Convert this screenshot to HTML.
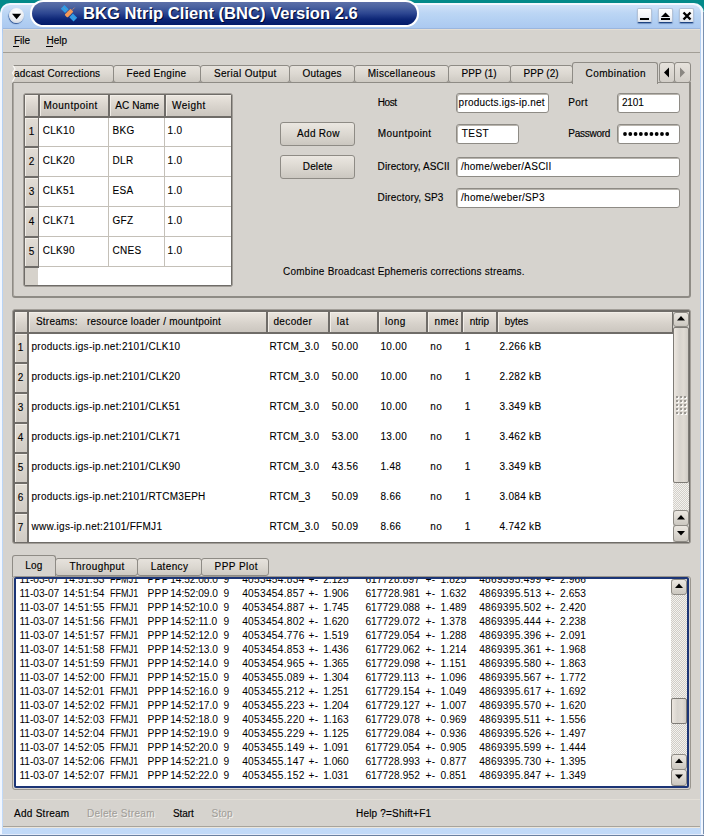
<!DOCTYPE html><html><head><meta charset="utf-8"><style>
*{margin:0;padding:0;box-sizing:border-box}
html,body{width:704px;height:836px;overflow:hidden;background:#038a8a;font-family:"Liberation Sans",sans-serif;}
.abs{position:absolute}
.t{position:absolute;white-space:pre;font-size:10px;line-height:14px;color:#000}
.tab{position:absolute;top:65px;height:18px;background:linear-gradient(#e6e2dc,#dcd8d1 50%,#cdc9c2);border:1px solid #8e8b85;border-radius:3px}
.inp{position:absolute;background:#fff;border:1px solid #8e8b85;border-radius:3px;box-shadow:inset 1px 1px 0 #b8b4ad}
.btn{position:absolute;background:linear-gradient(#ebe7e1,#dcd8d1 50%,#cbc7c0);border:1px solid #8e8b85;border-radius:3px}
.hc{position:absolute;background:linear-gradient(#ebe6df,#d8d3cc 55%,#cbc6bf)}
.rhc{position:absolute;background:linear-gradient(#e2ddd5,#d0cbc4)}
</style></head><body>
<div class="abs" style="left:0;top:3px;width:704px;height:833px;background:#f2f7ff;border-radius:10px 10px 0 0"></div>
<div class="abs" style="left:703px;top:12px;width:1px;height:824px;background:#7890b0"></div>
<div class="abs" style="left:2px;top:5px;width:699px;height:829px;background:linear-gradient(#d0e2f8 0,#bcd6f4 8px,#b2cff2 16px,#aac8f0 24px,#b4d0f2 30px,#c2daf8 100%);border-radius:8px 8px 0 0"></div>
<div class="abs" style="left:0;top:835px;width:704px;height:1px;background:#6a80a0"></div>
<div class="abs" style="left:0;top:834px;width:704px;height:1px;background:#e4ecfc"></div>
<div class="abs" style="left:30px;top:0;width:389px;height:27px;border-radius:13px;background:#fff"></div>
<div class="abs" style="left:32px;top:2px;width:385px;height:23px;border-radius:12px;background:linear-gradient(#5d70a8,#4a62a0 22%,#2c4590 50%,#0d2676 75%,#031b69)"></div>
<div class="t" style="left:83px;top:4px;font-size:16.6px;line-height:20px;color:#fff;font-weight:bold;text-shadow:1px 1px 0 #000a35">BKG Ntrip Client (BNC) Version 2.6</div>
<svg class="abs" style="left:56px;top:2px" width="26" height="22" viewBox="0 0 26 22">
<g transform="translate(13 11.2) rotate(45) scale(0.86)"><rect x="-10.5" y="-3" width="7" height="6" fill="#2d9be8"/><rect x="3.5" y="-3" width="7" height="6" fill="#2d9be8"/>
<line x1="-10" y1="0" x2="10" y2="0" stroke="#e0905a" stroke-width="0.6" stroke-dasharray="1 1"/>
<rect x="-2.4" y="-5" width="4.8" height="10" rx="1.2" fill="#f49a58"/><line x1="0" y1="-5" x2="0" y2="-9.5" stroke="#f0905a" stroke-width="1" stroke-dasharray="1.2 0.8"/></g></svg>
<div class="abs" style="left:9px;top:8px;width:15px;height:15px;border-radius:50%;background:radial-gradient(circle at 50% 30%,#ffffff,#eef0f4 50%,#c4ccd8);box-shadow:-0.5px 1px 1px #2a5090"></div>
<svg class="abs" style="left:11px;top:13px" width="11" height="7"><polygon points="1,0.8 10.2,0.8 5.6,6.2" fill="#000"/></svg>
<div class="abs" style="left:637px;top:8px;width:15px;height:15px;background:linear-gradient(#ffffff,#f4f6fa 50%,#dde3ec);border:1px solid #b4c2d6;border-bottom:1px solid #1e4482;border-radius:2px;box-shadow:0 1px 1px #6f90c0"></div>
<div class="abs" style="left:640px;top:18px;width:9px;height:2px;background:#000"></div>
<div class="abs" style="left:658px;top:8px;width:15px;height:15px;background:linear-gradient(#ffffff,#f4f6fa 50%,#dde3ec);border:1px solid #b4c2d6;border-bottom:1px solid #1e4482;border-radius:2px;box-shadow:0 1px 1px #6f90c0"></div>
<svg class="abs" style="left:661px;top:12px" width="10" height="9"><polygon points="4.5,0.5 9,5 0,5" fill="#000"/><rect x="0" y="6" width="9" height="2" fill="#000"/></svg>
<div class="abs" style="left:679px;top:8px;width:15px;height:15px;background:linear-gradient(#ffffff,#f4f6fa 50%,#dde3ec);border:1px solid #b4c2d6;border-bottom:1px solid #1e4482;border-radius:2px;box-shadow:0 1px 1px #6f90c0"></div>
<svg class="abs" style="left:682px;top:11px" width="10" height="10"><path d="M1.5 1.5L8.5 8.5M8.5 1.5L1.5 8.5" stroke="#000" stroke-width="2.4"/></svg>
<div class="abs" style="left:3px;top:28px;width:697px;height:1px;background:#9ab6de"></div>
<div class="abs" style="left:3px;top:29px;width:697px;height:799px;background:#d6d3ce"></div>
<div class="abs" style="left:3px;top:29px;width:697px;height:1px;background:#e4ded4"></div>
<div class="t" style="left:13.90px;top:34.00px;font-size:10px;letter-spacing:-0.003px;-webkit-text-stroke:0.15px #000;">File</div>
<div class="abs" style="left:13px;top:46px;width:6px;height:1px;background:#000"></div>
<div class="t" style="left:46.60px;top:34.00px;font-size:10px;letter-spacing:-0.023px;-webkit-text-stroke:0.15px #000;">Help</div>
<div class="abs" style="left:46px;top:46px;width:7px;height:1px;background:#000"></div>
<div class="abs" style="left:3px;top:52px;width:697px;height:1px;background:#a29e96"></div>
<div class="abs" style="left:12px;top:82px;width:679px;height:216px;border:1px solid #8e8b85;border-right-width:2px;border-bottom-width:2px;border-radius:0 0 3px 3px;background:#d6d3ce;box-shadow:inset 1px 0 0 #a9a59f"></div>
<div class="tab" style="left:13px;width:101px;border-left:none;border-radius:0 3px 3px 0"></div>
<svg class="abs" style="left:8px;top:64px" width="12" height="20"><polygon points="0,0 5,1.5 7,5 4.5,9 7,13 4.5,17.5 5,19 0,19" fill="#d6d3ce"/><polyline points="5,1.5 7,5 4.5,9 7,13 4.5,17.5" fill="none" stroke="#faf8f5" stroke-width="1.2"/></svg>
<div class="t" style="left:14.10px;top:67.00px;font-size:10px;letter-spacing:0.155px;-webkit-text-stroke:0.15px #000;">adcast Corrections</div>
<div class="tab" style="left:113px;width:88px"></div>
<div class="t" style="left:126.60px;top:67.00px;font-size:10px;letter-spacing:0.279px;-webkit-text-stroke:0.15px #000;">Feed Engine</div>
<div class="tab" style="left:200px;width:90px"></div>
<div class="t" style="left:213.90px;top:67.00px;font-size:10px;letter-spacing:0.345px;-webkit-text-stroke:0.15px #000;">Serial Output</div>
<div class="tab" style="left:289px;width:66px"></div>
<div class="t" style="left:302.50px;top:67.00px;font-size:10px;letter-spacing:0.183px;-webkit-text-stroke:0.15px #000;">Outages</div>
<div class="tab" style="left:354px;width:95px"></div>
<div class="t" style="left:367.70px;top:67.00px;font-size:10px;letter-spacing:0.345px;-webkit-text-stroke:0.15px #000;">Miscellaneous</div>
<div class="tab" style="left:448px;width:63px"></div>
<div class="t" style="left:461.60px;top:67.00px;font-size:10px;letter-spacing:0.045px;-webkit-text-stroke:0.15px #000;">PPP (1)</div>
<div class="tab" style="left:510px;width:63px"></div>
<div class="t" style="left:523.50px;top:67.00px;font-size:10px;letter-spacing:0.045px;-webkit-text-stroke:0.15px #000;">PPP (2)</div>
<div class="abs" style="left:572px;top:62px;width:86px;height:22px;background:#d6d3ce;border:1px solid #8e8b85;border-bottom:none;border-radius:3px 3px 0 0"></div>
<div class="t" style="left:585.60px;top:66.50px;font-size:10px;letter-spacing:0.386px;-webkit-text-stroke:0.15px #000;">Combination</div>
<div class="abs" style="left:659px;top:62px;width:16px;height:21px;background:linear-gradient(#e6e2dc,#d2cec8);border:1px solid #8e8b85;border-radius:3px"></div>
<svg class="abs" style="left:663px;top:67px" width="8" height="11"><polygon points="6,0.5 6,10.5 1,5.5" fill="#000"/></svg>
<div class="abs" style="left:674px;top:62px;width:17px;height:21px;background:linear-gradient(#e6e2dc,#d2cec8);border:1px solid #8e8b85;border-radius:3px"></div>
<svg class="abs" style="left:679px;top:67px" width="8" height="11"><polygon points="1,0.5 1,10.5 6,5.5" fill="#8a8782"/></svg>
<div class="abs" style="left:23px;top:93px;width:210px;height:194px;border:1px solid #a29e98;border-radius:3px;background:#6f6c68"></div>
<div class="abs" style="left:25px;top:95px;width:206px;height:190px;background:#fff"></div>
<div class="abs" style="left:25px;top:95px;width:13px;height:190px;background:#d6d2cb"></div>
<div class="abs" style="left:25px;top:95px;width:206px;height:23px;background:#6f6c68"></div>
<div class="hc" style="left:25px;top:95px;width:13px;height:21px;box-shadow:inset 1px 1px 0 #f2eee8"></div>
<div class="hc" style="left:40px;top:95px;width:68px;height:21px;box-shadow:inset 1px 1px 0 #f2eee8"></div>
<div class="hc" style="left:110px;top:95px;width:54px;height:21px;box-shadow:inset 1px 1px 0 #f2eee8"></div>
<div class="hc" style="left:166px;top:95px;width:65px;height:21px;box-shadow:inset 1px 1px 0 #f2eee8"></div>
<div class="t" style="left:43.40px;top:99.30px;font-size:10px;letter-spacing:0.502px;-webkit-text-stroke:0.15px #000;">Mountpoint</div>
<div class="t" style="left:115.20px;top:99.30px;font-size:10px;letter-spacing:0.092px;-webkit-text-stroke:0.15px #000;">AC Name</div>
<div class="t" style="left:171.90px;top:99.30px;font-size:10px;letter-spacing:0.492px;-webkit-text-stroke:0.15px #000;">Weight</div>
<div class="abs" style="left:25px;top:118px;width:14px;height:30px;background:#6f6c68"></div>
<div class="rhc" style="left:25px;top:118px;width:13px;height:28px;box-shadow:inset 1px 1px 0 #f2eee8"></div>
<div class="t" style="left:28.80px;top:124.50px;font-size:10px;letter-spacing:0.000px;-webkit-text-stroke:0.1px #000;">1</div>
<div class="abs" style="left:39px;top:146px;width:192px;height:1px;background:#c4c0b8"></div>
<div class="t" style="left:42.70px;top:124.00px;font-size:10px;letter-spacing:0.300px;-webkit-text-stroke:0.1px #000;">CLK10</div>
<div class="t" style="left:112.50px;top:124.00px;font-size:10px;letter-spacing:0.300px;-webkit-text-stroke:0.1px #000;">BKG</div>
<div class="t" style="left:167.60px;top:124.00px;font-size:10px;letter-spacing:0.300px;-webkit-text-stroke:0.1px #000;">1.0</div>
<div class="abs" style="left:25px;top:148px;width:14px;height:30px;background:#6f6c68"></div>
<div class="rhc" style="left:25px;top:148px;width:13px;height:28px;box-shadow:inset 1px 1px 0 #f2eee8"></div>
<div class="t" style="left:28.80px;top:154.50px;font-size:10px;letter-spacing:0.000px;-webkit-text-stroke:0.1px #000;">2</div>
<div class="abs" style="left:39px;top:176px;width:192px;height:1px;background:#c4c0b8"></div>
<div class="t" style="left:42.70px;top:154.00px;font-size:10px;letter-spacing:0.300px;-webkit-text-stroke:0.1px #000;">CLK20</div>
<div class="t" style="left:112.50px;top:154.00px;font-size:10px;letter-spacing:0.300px;-webkit-text-stroke:0.1px #000;">DLR</div>
<div class="t" style="left:167.60px;top:154.00px;font-size:10px;letter-spacing:0.300px;-webkit-text-stroke:0.1px #000;">1.0</div>
<div class="abs" style="left:25px;top:178px;width:14px;height:30px;background:#6f6c68"></div>
<div class="rhc" style="left:25px;top:178px;width:13px;height:28px;box-shadow:inset 1px 1px 0 #f2eee8"></div>
<div class="t" style="left:28.80px;top:184.50px;font-size:10px;letter-spacing:0.000px;-webkit-text-stroke:0.1px #000;">3</div>
<div class="abs" style="left:39px;top:206px;width:192px;height:1px;background:#c4c0b8"></div>
<div class="t" style="left:42.70px;top:184.00px;font-size:10px;letter-spacing:0.300px;-webkit-text-stroke:0.1px #000;">CLK51</div>
<div class="t" style="left:112.50px;top:184.00px;font-size:10px;letter-spacing:0.300px;-webkit-text-stroke:0.1px #000;">ESA</div>
<div class="t" style="left:167.60px;top:184.00px;font-size:10px;letter-spacing:0.300px;-webkit-text-stroke:0.1px #000;">1.0</div>
<div class="abs" style="left:25px;top:208px;width:14px;height:30px;background:#6f6c68"></div>
<div class="rhc" style="left:25px;top:208px;width:13px;height:28px;box-shadow:inset 1px 1px 0 #f2eee8"></div>
<div class="t" style="left:28.80px;top:214.50px;font-size:10px;letter-spacing:0.000px;-webkit-text-stroke:0.1px #000;">4</div>
<div class="abs" style="left:39px;top:236px;width:192px;height:1px;background:#c4c0b8"></div>
<div class="t" style="left:42.70px;top:214.00px;font-size:10px;letter-spacing:0.300px;-webkit-text-stroke:0.1px #000;">CLK71</div>
<div class="t" style="left:112.50px;top:214.00px;font-size:10px;letter-spacing:0.300px;-webkit-text-stroke:0.1px #000;">GFZ</div>
<div class="t" style="left:167.60px;top:214.00px;font-size:10px;letter-spacing:0.300px;-webkit-text-stroke:0.1px #000;">1.0</div>
<div class="abs" style="left:25px;top:238px;width:14px;height:30px;background:#6f6c68"></div>
<div class="rhc" style="left:25px;top:238px;width:13px;height:28px;box-shadow:inset 1px 1px 0 #f2eee8"></div>
<div class="t" style="left:28.80px;top:244.50px;font-size:10px;letter-spacing:0.000px;-webkit-text-stroke:0.1px #000;">5</div>
<div class="abs" style="left:39px;top:266px;width:192px;height:1px;background:#c4c0b8"></div>
<div class="t" style="left:42.70px;top:244.00px;font-size:10px;letter-spacing:0.300px;-webkit-text-stroke:0.1px #000;">CLK90</div>
<div class="t" style="left:112.50px;top:244.00px;font-size:10px;letter-spacing:0.300px;-webkit-text-stroke:0.1px #000;">CNES</div>
<div class="t" style="left:167.60px;top:244.00px;font-size:10px;letter-spacing:0.300px;-webkit-text-stroke:0.1px #000;">1.0</div>
<div class="abs" style="left:108px;top:118px;width:1px;height:149px;background:#c4c0b8"></div>
<div class="abs" style="left:164px;top:118px;width:1px;height:149px;background:#c4c0b8"></div>
<div class="btn" style="left:280px;top:122px;width:75px;height:24px"></div>
<div class="t" style="left:297.10px;top:127.10px;font-size:10px;letter-spacing:0.283px;-webkit-text-stroke:0.15px #000;">Add Row</div>
<div class="btn" style="left:280px;top:155px;width:75px;height:24px"></div>
<div class="t" style="left:302.80px;top:160.20px;font-size:10px;letter-spacing:0.138px;-webkit-text-stroke:0.15px #000;">Delete</div>
<div class="t" style="left:377.80px;top:96.00px;font-size:10px;letter-spacing:-0.453px;-webkit-text-stroke:0.15px #000;">Host</div>
<div class="t" style="left:377.70px;top:127.00px;font-size:10px;letter-spacing:0.436px;-webkit-text-stroke:0.15px #000;">Mountpoint</div>
<div class="t" style="left:377.60px;top:160.20px;font-size:10px;letter-spacing:0.107px;-webkit-text-stroke:0.15px #000;">Directory, ASCII</div>
<div class="t" style="left:377.60px;top:191.20px;font-size:10px;letter-spacing:0.160px;-webkit-text-stroke:0.15px #000;">Directory, SP3</div>
<div class="t" style="left:568.30px;top:96.00px;font-size:10px;letter-spacing:0.287px;-webkit-text-stroke:0.15px #000;">Port</div>
<div class="t" style="left:568.30px;top:127.00px;font-size:10px;letter-spacing:-0.273px;-webkit-text-stroke:0.15px #000;">Password</div>
<div class="inp" style="left:456px;top:93px;width:93px;height:20px"></div>
<div class="inp" style="left:617px;top:93px;width:63px;height:20px"></div>
<div class="inp" style="left:456px;top:124px;width:63px;height:20px"></div>
<div class="inp" style="left:456px;top:157px;width:224px;height:20px"></div>
<div class="inp" style="left:456px;top:188px;width:224px;height:20px"></div>
<div class="inp" style="left:617px;top:124px;width:63px;height:20px"></div>
<div class="t" style="left:458.60px;top:96.00px;font-size:10px;letter-spacing:0.238px;-webkit-text-stroke:0.1px #000;">products.igs-ip.net</div>
<div class="t" style="left:621.90px;top:95.70px;font-size:10px;letter-spacing:-0.083px;-webkit-text-stroke:0.1px #000;">2101</div>
<div class="t" style="left:461.70px;top:127.00px;font-size:10px;letter-spacing:0.480px;-webkit-text-stroke:0.1px #000;">TEST</div>
<div class="t" style="left:461.00px;top:160.20px;font-size:10px;letter-spacing:0.231px;-webkit-text-stroke:0.1px #000;">/home/weber/ASCII</div>
<div class="t" style="left:461.00px;top:191.20px;font-size:10px;letter-spacing:0.294px;-webkit-text-stroke:0.1px #000;">/home/weber/SP3</div>
<svg class="abs" style="left:622px;top:131px" width="50" height="6"><circle cx="3.00" cy="3" r="1.9" fill="#000"/><circle cx="8.28" cy="3" r="1.9" fill="#000"/><circle cx="13.56" cy="3" r="1.9" fill="#000"/><circle cx="18.84" cy="3" r="1.9" fill="#000"/><circle cx="24.12" cy="3" r="1.9" fill="#000"/><circle cx="29.40" cy="3" r="1.9" fill="#000"/><circle cx="34.68" cy="3" r="1.9" fill="#000"/><circle cx="39.96" cy="3" r="1.9" fill="#000"/><circle cx="45.24" cy="3" r="1.9" fill="#000"/></svg>
<div class="t" style="left:283.10px;top:264.60px;font-size:10px;letter-spacing:0.219px;-webkit-text-stroke:0.1px #000;">Combine Broadcast Ephemeris corrections streams.</div>
<div class="abs" style="left:12px;top:309px;width:679px;height:235px;border:1px solid #a29e98;border-radius:3px;background:#6f6c68"></div>
<div class="abs" style="left:15px;top:312px;width:674px;height:230px;background:#fff"></div>
<div class="abs" style="left:15px;top:312px;width:658px;height:22px;background:#6f6c68"></div>
<div class="hc" style="left:15px;top:312px;width:12px;height:20px;box-shadow:inset 1px 1px 0 #f2eee8"></div>
<div class="hc" style="left:29px;top:312px;width:237px;height:20px;box-shadow:inset 1px 1px 0 #f2eee8"></div>
<div class="hc" style="left:268px;top:312px;width:60px;height:20px;box-shadow:inset 1px 1px 0 #f2eee8"></div>
<div class="hc" style="left:330px;top:312px;width:47px;height:20px;box-shadow:inset 1px 1px 0 #f2eee8"></div>
<div class="hc" style="left:379px;top:312px;width:47px;height:20px;box-shadow:inset 1px 1px 0 #f2eee8"></div>
<div class="hc" style="left:428px;top:312px;width:33px;height:20px;box-shadow:inset 1px 1px 0 #f2eee8"></div>
<div class="hc" style="left:463px;top:312px;width:33px;height:20px;box-shadow:inset 1px 1px 0 #f2eee8"></div>
<div class="hc" style="left:498px;top:312px;width:174px;height:20px;box-shadow:inset 1px 1px 0 #f2eee8"></div>
<div class="t" style="left:35.90px;top:315.00px;font-size:10px;letter-spacing:0.246px;-webkit-text-stroke:0.15px #000;">Streams:   resource loader / mountpoint</div>
<div class="t" style="left:273.40px;top:315.00px;font-size:10px;letter-spacing:0.377px;-webkit-text-stroke:0.15px #000;">decoder</div>
<div class="t" style="left:336.70px;top:315.00px;font-size:10px;letter-spacing:0.670px;-webkit-text-stroke:0.15px #000;">lat</div>
<div class="t" style="left:385.00px;top:315.00px;font-size:10px;letter-spacing:0.497px;-webkit-text-stroke:0.15px #000;">long</div>
<div class="abs" style="left:428px;top:312px;width:30px;height:19px;overflow:hidden"><div class="abs" style="left:-428px;top:0">
<div class="t" style="left:434.50px;top:3.00px;font-size:10px;letter-spacing:0.350px;-webkit-text-stroke:0.15px #000;">nmea</div>
</div></div>
<div class="t" style="left:469.80px;top:315.00px;font-size:10px;letter-spacing:-0.062px;-webkit-text-stroke:0.15px #000;">ntrip</div>
<div class="t" style="left:504.70px;top:315.00px;font-size:10px;letter-spacing:-0.100px;-webkit-text-stroke:0.15px #000;">bytes</div>
<div class="abs" style="left:15px;top:332px;width:14px;height:30px;background:#6f6c68"></div>
<div class="rhc" style="left:15px;top:334px;width:12px;height:28px;box-shadow:inset 1px 1px 0 #f2eee8"></div>
<div class="t" style="left:17.80px;top:341.00px;font-size:10px;letter-spacing:0.000px;-webkit-text-stroke:0.1px #000;">1</div>
<div class="t" style="left:31.40px;top:340.00px;font-size:10px;letter-spacing:0.300px;-webkit-text-stroke:0.1px #000;">products.igs-ip.net:2101/CLK10</div>
<div class="t" style="left:269.50px;top:340.00px;font-size:10px;letter-spacing:0.200px;-webkit-text-stroke:0.1px #000;">RTCM_3.0</div>
<div class="t" style="left:331.80px;top:340.00px;font-size:10px;letter-spacing:0.300px;-webkit-text-stroke:0.1px #000;">50.00</div>
<div class="t" style="left:380.50px;top:340.00px;font-size:10px;letter-spacing:0.300px;-webkit-text-stroke:0.1px #000;">10.00</div>
<div class="t" style="left:430.30px;top:340.00px;font-size:10px;letter-spacing:0.500px;-webkit-text-stroke:0.1px #000;">no</div>
<div class="t" style="left:464.70px;top:340.00px;font-size:10px;letter-spacing:0.000px;-webkit-text-stroke:0.1px #000;">1</div>
<div class="t" style="left:499.50px;top:340.00px;font-size:10px;letter-spacing:0.300px;-webkit-text-stroke:0.1px #000;">2.266 kB</div>
<div class="abs" style="left:15px;top:362px;width:14px;height:30px;background:#6f6c68"></div>
<div class="rhc" style="left:15px;top:364px;width:12px;height:28px;box-shadow:inset 1px 1px 0 #f2eee8"></div>
<div class="t" style="left:17.80px;top:371.00px;font-size:10px;letter-spacing:0.000px;-webkit-text-stroke:0.1px #000;">2</div>
<div class="t" style="left:31.40px;top:370.00px;font-size:10px;letter-spacing:0.300px;-webkit-text-stroke:0.1px #000;">products.igs-ip.net:2101/CLK20</div>
<div class="t" style="left:269.50px;top:370.00px;font-size:10px;letter-spacing:0.200px;-webkit-text-stroke:0.1px #000;">RTCM_3.0</div>
<div class="t" style="left:331.80px;top:370.00px;font-size:10px;letter-spacing:0.300px;-webkit-text-stroke:0.1px #000;">50.00</div>
<div class="t" style="left:380.50px;top:370.00px;font-size:10px;letter-spacing:0.300px;-webkit-text-stroke:0.1px #000;">10.00</div>
<div class="t" style="left:430.30px;top:370.00px;font-size:10px;letter-spacing:0.500px;-webkit-text-stroke:0.1px #000;">no</div>
<div class="t" style="left:464.70px;top:370.00px;font-size:10px;letter-spacing:0.000px;-webkit-text-stroke:0.1px #000;">1</div>
<div class="t" style="left:499.50px;top:370.00px;font-size:10px;letter-spacing:0.300px;-webkit-text-stroke:0.1px #000;">2.282 kB</div>
<div class="abs" style="left:15px;top:392px;width:14px;height:30px;background:#6f6c68"></div>
<div class="rhc" style="left:15px;top:394px;width:12px;height:28px;box-shadow:inset 1px 1px 0 #f2eee8"></div>
<div class="t" style="left:17.80px;top:401.00px;font-size:10px;letter-spacing:0.000px;-webkit-text-stroke:0.1px #000;">3</div>
<div class="t" style="left:31.40px;top:400.00px;font-size:10px;letter-spacing:0.300px;-webkit-text-stroke:0.1px #000;">products.igs-ip.net:2101/CLK51</div>
<div class="t" style="left:269.50px;top:400.00px;font-size:10px;letter-spacing:0.200px;-webkit-text-stroke:0.1px #000;">RTCM_3.0</div>
<div class="t" style="left:331.80px;top:400.00px;font-size:10px;letter-spacing:0.300px;-webkit-text-stroke:0.1px #000;">50.00</div>
<div class="t" style="left:380.50px;top:400.00px;font-size:10px;letter-spacing:0.300px;-webkit-text-stroke:0.1px #000;">10.00</div>
<div class="t" style="left:430.30px;top:400.00px;font-size:10px;letter-spacing:0.500px;-webkit-text-stroke:0.1px #000;">no</div>
<div class="t" style="left:464.70px;top:400.00px;font-size:10px;letter-spacing:0.000px;-webkit-text-stroke:0.1px #000;">1</div>
<div class="t" style="left:499.50px;top:400.00px;font-size:10px;letter-spacing:0.300px;-webkit-text-stroke:0.1px #000;">3.349 kB</div>
<div class="abs" style="left:15px;top:422px;width:14px;height:30px;background:#6f6c68"></div>
<div class="rhc" style="left:15px;top:424px;width:12px;height:28px;box-shadow:inset 1px 1px 0 #f2eee8"></div>
<div class="t" style="left:17.80px;top:431.00px;font-size:10px;letter-spacing:0.000px;-webkit-text-stroke:0.1px #000;">4</div>
<div class="t" style="left:31.40px;top:430.00px;font-size:10px;letter-spacing:0.300px;-webkit-text-stroke:0.1px #000;">products.igs-ip.net:2101/CLK71</div>
<div class="t" style="left:269.50px;top:430.00px;font-size:10px;letter-spacing:0.200px;-webkit-text-stroke:0.1px #000;">RTCM_3.0</div>
<div class="t" style="left:331.80px;top:430.00px;font-size:10px;letter-spacing:0.300px;-webkit-text-stroke:0.1px #000;">53.00</div>
<div class="t" style="left:380.50px;top:430.00px;font-size:10px;letter-spacing:0.300px;-webkit-text-stroke:0.1px #000;">13.00</div>
<div class="t" style="left:430.30px;top:430.00px;font-size:10px;letter-spacing:0.500px;-webkit-text-stroke:0.1px #000;">no</div>
<div class="t" style="left:464.70px;top:430.00px;font-size:10px;letter-spacing:0.000px;-webkit-text-stroke:0.1px #000;">1</div>
<div class="t" style="left:499.50px;top:430.00px;font-size:10px;letter-spacing:0.300px;-webkit-text-stroke:0.1px #000;">3.462 kB</div>
<div class="abs" style="left:15px;top:452px;width:14px;height:30px;background:#6f6c68"></div>
<div class="rhc" style="left:15px;top:454px;width:12px;height:28px;box-shadow:inset 1px 1px 0 #f2eee8"></div>
<div class="t" style="left:17.80px;top:461.00px;font-size:10px;letter-spacing:0.000px;-webkit-text-stroke:0.1px #000;">5</div>
<div class="t" style="left:31.40px;top:460.00px;font-size:10px;letter-spacing:0.300px;-webkit-text-stroke:0.1px #000;">products.igs-ip.net:2101/CLK90</div>
<div class="t" style="left:269.50px;top:460.00px;font-size:10px;letter-spacing:0.200px;-webkit-text-stroke:0.1px #000;">RTCM_3.0</div>
<div class="t" style="left:331.80px;top:460.00px;font-size:10px;letter-spacing:0.300px;-webkit-text-stroke:0.1px #000;">43.56</div>
<div class="t" style="left:380.50px;top:460.00px;font-size:10px;letter-spacing:0.300px;-webkit-text-stroke:0.1px #000;">1.48</div>
<div class="t" style="left:430.30px;top:460.00px;font-size:10px;letter-spacing:0.500px;-webkit-text-stroke:0.1px #000;">no</div>
<div class="t" style="left:464.70px;top:460.00px;font-size:10px;letter-spacing:0.000px;-webkit-text-stroke:0.1px #000;">1</div>
<div class="t" style="left:499.50px;top:460.00px;font-size:10px;letter-spacing:0.300px;-webkit-text-stroke:0.1px #000;">3.349 kB</div>
<div class="abs" style="left:15px;top:482px;width:14px;height:30px;background:#6f6c68"></div>
<div class="rhc" style="left:15px;top:484px;width:12px;height:28px;box-shadow:inset 1px 1px 0 #f2eee8"></div>
<div class="t" style="left:17.80px;top:491.00px;font-size:10px;letter-spacing:0.000px;-webkit-text-stroke:0.1px #000;">6</div>
<div class="t" style="left:31.40px;top:490.00px;font-size:10px;letter-spacing:0.300px;-webkit-text-stroke:0.1px #000;">products.igs-ip.net:2101/RTCM3EPH</div>
<div class="t" style="left:269.50px;top:490.00px;font-size:10px;letter-spacing:0.200px;-webkit-text-stroke:0.1px #000;">RTCM_3</div>
<div class="t" style="left:331.80px;top:490.00px;font-size:10px;letter-spacing:0.300px;-webkit-text-stroke:0.1px #000;">50.09</div>
<div class="t" style="left:380.50px;top:490.00px;font-size:10px;letter-spacing:0.300px;-webkit-text-stroke:0.1px #000;">8.66</div>
<div class="t" style="left:430.30px;top:490.00px;font-size:10px;letter-spacing:0.500px;-webkit-text-stroke:0.1px #000;">no</div>
<div class="t" style="left:464.70px;top:490.00px;font-size:10px;letter-spacing:0.000px;-webkit-text-stroke:0.1px #000;">1</div>
<div class="t" style="left:499.50px;top:490.00px;font-size:10px;letter-spacing:0.300px;-webkit-text-stroke:0.1px #000;">3.084 kB</div>
<div class="abs" style="left:15px;top:512px;width:14px;height:30px;background:#6f6c68"></div>
<div class="rhc" style="left:15px;top:514px;width:12px;height:28px;box-shadow:inset 1px 1px 0 #f2eee8"></div>
<div class="t" style="left:17.80px;top:521.00px;font-size:10px;letter-spacing:0.000px;-webkit-text-stroke:0.1px #000;">7</div>
<div class="t" style="left:31.42px;top:520.00px;font-size:10px;letter-spacing:0.300px;-webkit-text-stroke:0.1px #000;">www.igs-ip.net:2101/FFMJ1</div>
<div class="t" style="left:269.50px;top:520.00px;font-size:10px;letter-spacing:0.200px;-webkit-text-stroke:0.1px #000;">RTCM_3.0</div>
<div class="t" style="left:331.80px;top:520.00px;font-size:10px;letter-spacing:0.300px;-webkit-text-stroke:0.1px #000;">50.09</div>
<div class="t" style="left:380.50px;top:520.00px;font-size:10px;letter-spacing:0.300px;-webkit-text-stroke:0.1px #000;">8.66</div>
<div class="t" style="left:430.30px;top:520.00px;font-size:10px;letter-spacing:0.500px;-webkit-text-stroke:0.1px #000;">no</div>
<div class="t" style="left:464.70px;top:520.00px;font-size:10px;letter-spacing:0.000px;-webkit-text-stroke:0.1px #000;">1</div>
<div class="t" style="left:499.50px;top:520.00px;font-size:10px;letter-spacing:0.300px;-webkit-text-stroke:0.1px #000;">4.742 kB</div>
<div class="abs" style="left:673px;top:312px;width:16px;height:230px;background:#d6d3ce"></div>
<div class="btn" style="left:673px;top:312px;width:16px;height:15px"></div>
<svg class="abs" style="left:676px;top:315px" width="10" height="7"><polygon points="5,1 9,5.5 1,5.5" fill="#000"/></svg>
<div class="abs" style="left:673px;top:327px;width:16px;height:156px;background:linear-gradient(90deg,#ece6df,#d8d4ce 40%,#e0dbd4 70%,#d0ccc6);border:1px solid #7e7b76;border-radius:2px"></div>
<div class="abs" style="left:676px;top:396px;width:2px;height:2px;background:#9a9792;box-shadow:1px 1px 0 #fbfaf8"></div>
<div class="abs" style="left:680px;top:396px;width:2px;height:2px;background:#9a9792;box-shadow:1px 1px 0 #fbfaf8"></div>
<div class="abs" style="left:684px;top:396px;width:2px;height:2px;background:#9a9792;box-shadow:1px 1px 0 #fbfaf8"></div>
<div class="abs" style="left:676px;top:400px;width:2px;height:2px;background:#9a9792;box-shadow:1px 1px 0 #fbfaf8"></div>
<div class="abs" style="left:680px;top:400px;width:2px;height:2px;background:#9a9792;box-shadow:1px 1px 0 #fbfaf8"></div>
<div class="abs" style="left:684px;top:400px;width:2px;height:2px;background:#9a9792;box-shadow:1px 1px 0 #fbfaf8"></div>
<div class="abs" style="left:676px;top:404px;width:2px;height:2px;background:#9a9792;box-shadow:1px 1px 0 #fbfaf8"></div>
<div class="abs" style="left:680px;top:404px;width:2px;height:2px;background:#9a9792;box-shadow:1px 1px 0 #fbfaf8"></div>
<div class="abs" style="left:684px;top:404px;width:2px;height:2px;background:#9a9792;box-shadow:1px 1px 0 #fbfaf8"></div>
<div class="abs" style="left:676px;top:408px;width:2px;height:2px;background:#9a9792;box-shadow:1px 1px 0 #fbfaf8"></div>
<div class="abs" style="left:680px;top:408px;width:2px;height:2px;background:#9a9792;box-shadow:1px 1px 0 #fbfaf8"></div>
<div class="abs" style="left:684px;top:408px;width:2px;height:2px;background:#9a9792;box-shadow:1px 1px 0 #fbfaf8"></div>
<div class="abs" style="left:676px;top:412px;width:2px;height:2px;background:#9a9792;box-shadow:1px 1px 0 #fbfaf8"></div>
<div class="abs" style="left:680px;top:412px;width:2px;height:2px;background:#9a9792;box-shadow:1px 1px 0 #fbfaf8"></div>
<div class="abs" style="left:684px;top:412px;width:2px;height:2px;background:#9a9792;box-shadow:1px 1px 0 #fbfaf8"></div>
<div class="abs" style="left:673px;top:483px;width:16px;height:27px;background:repeating-conic-gradient(#d2cfca 0 25%,#f4f2ee 0 50%) 0 0/2px 2px"></div>
<div class="btn" style="left:673px;top:510px;width:16px;height:16px"></div>
<svg class="abs" style="left:676px;top:514px" width="10" height="7"><polygon points="5,1 9,5.5 1,5.5" fill="#000"/></svg>
<div class="btn" style="left:673px;top:525px;width:16px;height:17px"></div>
<svg class="abs" style="left:676px;top:530px" width="10" height="7"><polygon points="1,1 9,1 5,5.5" fill="#000"/></svg>
<div class="tab" style="top:558px;left:55px;width:83px"></div>
<div class="tab" style="top:558px;left:137px;width:65px"></div>
<div class="tab" style="top:558px;left:201px;width:68px"></div>
<div class="t" style="left:69.60px;top:559.50px;font-size:10px;letter-spacing:0.394px;-webkit-text-stroke:0.15px #000;">Throughput</div>
<div class="t" style="left:150.70px;top:559.50px;font-size:10px;letter-spacing:0.380px;-webkit-text-stroke:0.15px #000;">Latency</div>
<div class="t" style="left:214.60px;top:559.50px;font-size:10px;letter-spacing:0.437px;-webkit-text-stroke:0.15px #000;">PPP Plot</div>
<div class="abs" style="left:12px;top:555px;width:44px;height:22px;background:#d6d3ce;border:1px solid #8e8b85;border-bottom:none;border-radius:3px 3px 0 0"></div>
<div class="t" style="left:25.30px;top:559.00px;font-size:10px;letter-spacing:0.210px;-webkit-text-stroke:0.15px #000;">Log</div>
<div class="abs" style="left:12px;top:576px;width:679px;height:214px;border:1px solid #9a968f;border-radius:3px"></div>
<div class="abs" style="left:14px;top:577px;width:675px;height:211px;border:2px solid #1c3576;border-radius:2px;background:#fff;overflow:hidden">
<div class="t" style="left:3.40px;top:-6.00px;font-size:10.2px;letter-spacing:-0.025px;">11-03-07</div>
<div class="t" style="left:47.30px;top:-6.00px;font-size:10.2px;letter-spacing:0.213px;">14:51:53</div>
<div class="t" style="left:93.50px;top:-6.00px;font-size:10.2px;letter-spacing:0.000px;transform:scaleX(0.89);transform-origin:0 0">FFMJ1</div>
<div class="t" style="left:131.50px;top:-6.00px;font-size:10.2px;letter-spacing:0.300px;">PPP</div>
<div class="t" style="left:154.20px;top:-6.00px;font-size:10.2px;letter-spacing:-0.057px;">14:52:08.0</div>
<div class="t" style="left:207.40px;top:-6.00px;font-size:10.2px;letter-spacing:0.000px;">9</div>
<div class="t" style="left:226.20px;top:-6.00px;font-size:10.2px;letter-spacing:0.264px;">4053454.834</div>
<div class="t" style="left:292.40px;top:-6.00px;font-size:10.2px;letter-spacing:0.300px;">+-</div>
<div class="t" style="left:307.20px;top:-6.00px;font-size:10.2px;letter-spacing:-0.005px;">2.125</div>
<div class="t" style="left:349.40px;top:-6.00px;font-size:10.2px;letter-spacing:0.068px;">617728.897</div>
<div class="t" style="left:409.50px;top:-6.00px;font-size:10.2px;letter-spacing:0.300px;">+-</div>
<div class="t" style="left:424.40px;top:-6.00px;font-size:10.2px;letter-spacing:0.120px;">1.825</div>
<div class="t" style="left:463.20px;top:-6.00px;font-size:10.2px;letter-spacing:0.244px;">4869395.499</div>
<div class="t" style="left:529.10px;top:-6.00px;font-size:10.2px;letter-spacing:0.300px;">+-</div>
<div class="t" style="left:544.00px;top:-6.00px;font-size:10.2px;letter-spacing:0.120px;">2.966</div>
<div class="t" style="left:3.40px;top:8.00px;font-size:10.2px;letter-spacing:-0.025px;">11-03-07</div>
<div class="t" style="left:47.30px;top:8.00px;font-size:10.2px;letter-spacing:0.213px;">14:51:54</div>
<div class="t" style="left:93.50px;top:8.00px;font-size:10.2px;letter-spacing:0.000px;transform:scaleX(0.89);transform-origin:0 0">FFMJ1</div>
<div class="t" style="left:131.50px;top:8.00px;font-size:10.2px;letter-spacing:0.300px;">PPP</div>
<div class="t" style="left:154.20px;top:8.00px;font-size:10.2px;letter-spacing:-0.057px;">14:52:09.0</div>
<div class="t" style="left:207.40px;top:8.00px;font-size:10.2px;letter-spacing:0.000px;">9</div>
<div class="t" style="left:226.20px;top:8.00px;font-size:10.2px;letter-spacing:0.264px;">4053454.857</div>
<div class="t" style="left:292.40px;top:8.00px;font-size:10.2px;letter-spacing:0.300px;">+-</div>
<div class="t" style="left:307.20px;top:8.00px;font-size:10.2px;letter-spacing:-0.005px;">1.906</div>
<div class="t" style="left:349.40px;top:8.00px;font-size:10.2px;letter-spacing:0.068px;">617728.981</div>
<div class="t" style="left:409.50px;top:8.00px;font-size:10.2px;letter-spacing:0.300px;">+-</div>
<div class="t" style="left:424.40px;top:8.00px;font-size:10.2px;letter-spacing:0.120px;">1.632</div>
<div class="t" style="left:463.20px;top:8.00px;font-size:10.2px;letter-spacing:0.244px;">4869395.513</div>
<div class="t" style="left:529.10px;top:8.00px;font-size:10.2px;letter-spacing:0.300px;">+-</div>
<div class="t" style="left:544.00px;top:8.00px;font-size:10.2px;letter-spacing:0.120px;">2.653</div>
<div class="t" style="left:3.40px;top:22.00px;font-size:10.2px;letter-spacing:-0.025px;">11-03-07</div>
<div class="t" style="left:47.30px;top:22.00px;font-size:10.2px;letter-spacing:0.213px;">14:51:55</div>
<div class="t" style="left:93.50px;top:22.00px;font-size:10.2px;letter-spacing:0.000px;transform:scaleX(0.89);transform-origin:0 0">FFMJ1</div>
<div class="t" style="left:131.50px;top:22.00px;font-size:10.2px;letter-spacing:0.300px;">PPP</div>
<div class="t" style="left:154.20px;top:22.00px;font-size:10.2px;letter-spacing:-0.057px;">14:52:10.0</div>
<div class="t" style="left:207.40px;top:22.00px;font-size:10.2px;letter-spacing:0.000px;">9</div>
<div class="t" style="left:226.20px;top:22.00px;font-size:10.2px;letter-spacing:0.264px;">4053454.887</div>
<div class="t" style="left:292.40px;top:22.00px;font-size:10.2px;letter-spacing:0.300px;">+-</div>
<div class="t" style="left:307.20px;top:22.00px;font-size:10.2px;letter-spacing:-0.005px;">1.745</div>
<div class="t" style="left:349.40px;top:22.00px;font-size:10.2px;letter-spacing:0.068px;">617729.088</div>
<div class="t" style="left:409.50px;top:22.00px;font-size:10.2px;letter-spacing:0.300px;">+-</div>
<div class="t" style="left:424.40px;top:22.00px;font-size:10.2px;letter-spacing:0.120px;">1.489</div>
<div class="t" style="left:463.20px;top:22.00px;font-size:10.2px;letter-spacing:0.244px;">4869395.502</div>
<div class="t" style="left:529.10px;top:22.00px;font-size:10.2px;letter-spacing:0.300px;">+-</div>
<div class="t" style="left:544.00px;top:22.00px;font-size:10.2px;letter-spacing:0.120px;">2.420</div>
<div class="t" style="left:3.40px;top:36.00px;font-size:10.2px;letter-spacing:-0.025px;">11-03-07</div>
<div class="t" style="left:47.30px;top:36.00px;font-size:10.2px;letter-spacing:0.213px;">14:51:56</div>
<div class="t" style="left:93.50px;top:36.00px;font-size:10.2px;letter-spacing:0.000px;transform:scaleX(0.89);transform-origin:0 0">FFMJ1</div>
<div class="t" style="left:131.50px;top:36.00px;font-size:10.2px;letter-spacing:0.300px;">PPP</div>
<div class="t" style="left:154.20px;top:36.00px;font-size:10.2px;letter-spacing:-0.057px;">14:52:11.0</div>
<div class="t" style="left:207.40px;top:36.00px;font-size:10.2px;letter-spacing:0.000px;">9</div>
<div class="t" style="left:226.20px;top:36.00px;font-size:10.2px;letter-spacing:0.264px;">4053454.802</div>
<div class="t" style="left:292.40px;top:36.00px;font-size:10.2px;letter-spacing:0.300px;">+-</div>
<div class="t" style="left:307.20px;top:36.00px;font-size:10.2px;letter-spacing:-0.005px;">1.620</div>
<div class="t" style="left:349.40px;top:36.00px;font-size:10.2px;letter-spacing:0.068px;">617729.072</div>
<div class="t" style="left:409.50px;top:36.00px;font-size:10.2px;letter-spacing:0.300px;">+-</div>
<div class="t" style="left:424.40px;top:36.00px;font-size:10.2px;letter-spacing:0.120px;">1.378</div>
<div class="t" style="left:463.20px;top:36.00px;font-size:10.2px;letter-spacing:0.244px;">4869395.444</div>
<div class="t" style="left:529.10px;top:36.00px;font-size:10.2px;letter-spacing:0.300px;">+-</div>
<div class="t" style="left:544.00px;top:36.00px;font-size:10.2px;letter-spacing:0.120px;">2.238</div>
<div class="t" style="left:3.40px;top:50.00px;font-size:10.2px;letter-spacing:-0.025px;">11-03-07</div>
<div class="t" style="left:47.30px;top:50.00px;font-size:10.2px;letter-spacing:0.213px;">14:51:57</div>
<div class="t" style="left:93.50px;top:50.00px;font-size:10.2px;letter-spacing:0.000px;transform:scaleX(0.89);transform-origin:0 0">FFMJ1</div>
<div class="t" style="left:131.50px;top:50.00px;font-size:10.2px;letter-spacing:0.300px;">PPP</div>
<div class="t" style="left:154.20px;top:50.00px;font-size:10.2px;letter-spacing:-0.057px;">14:52:12.0</div>
<div class="t" style="left:207.40px;top:50.00px;font-size:10.2px;letter-spacing:0.000px;">9</div>
<div class="t" style="left:226.20px;top:50.00px;font-size:10.2px;letter-spacing:0.264px;">4053454.776</div>
<div class="t" style="left:292.40px;top:50.00px;font-size:10.2px;letter-spacing:0.300px;">+-</div>
<div class="t" style="left:307.20px;top:50.00px;font-size:10.2px;letter-spacing:-0.005px;">1.519</div>
<div class="t" style="left:349.40px;top:50.00px;font-size:10.2px;letter-spacing:0.068px;">617729.054</div>
<div class="t" style="left:409.50px;top:50.00px;font-size:10.2px;letter-spacing:0.300px;">+-</div>
<div class="t" style="left:424.40px;top:50.00px;font-size:10.2px;letter-spacing:0.120px;">1.288</div>
<div class="t" style="left:463.20px;top:50.00px;font-size:10.2px;letter-spacing:0.244px;">4869395.396</div>
<div class="t" style="left:529.10px;top:50.00px;font-size:10.2px;letter-spacing:0.300px;">+-</div>
<div class="t" style="left:544.00px;top:50.00px;font-size:10.2px;letter-spacing:0.120px;">2.091</div>
<div class="t" style="left:3.40px;top:64.00px;font-size:10.2px;letter-spacing:-0.025px;">11-03-07</div>
<div class="t" style="left:47.30px;top:64.00px;font-size:10.2px;letter-spacing:0.213px;">14:51:58</div>
<div class="t" style="left:93.50px;top:64.00px;font-size:10.2px;letter-spacing:0.000px;transform:scaleX(0.89);transform-origin:0 0">FFMJ1</div>
<div class="t" style="left:131.50px;top:64.00px;font-size:10.2px;letter-spacing:0.300px;">PPP</div>
<div class="t" style="left:154.20px;top:64.00px;font-size:10.2px;letter-spacing:-0.057px;">14:52:13.0</div>
<div class="t" style="left:207.40px;top:64.00px;font-size:10.2px;letter-spacing:0.000px;">9</div>
<div class="t" style="left:226.20px;top:64.00px;font-size:10.2px;letter-spacing:0.264px;">4053454.853</div>
<div class="t" style="left:292.40px;top:64.00px;font-size:10.2px;letter-spacing:0.300px;">+-</div>
<div class="t" style="left:307.20px;top:64.00px;font-size:10.2px;letter-spacing:-0.005px;">1.436</div>
<div class="t" style="left:349.40px;top:64.00px;font-size:10.2px;letter-spacing:0.068px;">617729.062</div>
<div class="t" style="left:409.50px;top:64.00px;font-size:10.2px;letter-spacing:0.300px;">+-</div>
<div class="t" style="left:424.40px;top:64.00px;font-size:10.2px;letter-spacing:0.120px;">1.214</div>
<div class="t" style="left:463.20px;top:64.00px;font-size:10.2px;letter-spacing:0.244px;">4869395.361</div>
<div class="t" style="left:529.10px;top:64.00px;font-size:10.2px;letter-spacing:0.300px;">+-</div>
<div class="t" style="left:544.00px;top:64.00px;font-size:10.2px;letter-spacing:0.120px;">1.968</div>
<div class="t" style="left:3.40px;top:78.00px;font-size:10.2px;letter-spacing:-0.025px;">11-03-07</div>
<div class="t" style="left:47.30px;top:78.00px;font-size:10.2px;letter-spacing:0.213px;">14:51:59</div>
<div class="t" style="left:93.50px;top:78.00px;font-size:10.2px;letter-spacing:0.000px;transform:scaleX(0.89);transform-origin:0 0">FFMJ1</div>
<div class="t" style="left:131.50px;top:78.00px;font-size:10.2px;letter-spacing:0.300px;">PPP</div>
<div class="t" style="left:154.20px;top:78.00px;font-size:10.2px;letter-spacing:-0.057px;">14:52:14.0</div>
<div class="t" style="left:207.40px;top:78.00px;font-size:10.2px;letter-spacing:0.000px;">9</div>
<div class="t" style="left:226.20px;top:78.00px;font-size:10.2px;letter-spacing:0.264px;">4053454.965</div>
<div class="t" style="left:292.40px;top:78.00px;font-size:10.2px;letter-spacing:0.300px;">+-</div>
<div class="t" style="left:307.20px;top:78.00px;font-size:10.2px;letter-spacing:-0.005px;">1.365</div>
<div class="t" style="left:349.40px;top:78.00px;font-size:10.2px;letter-spacing:0.068px;">617729.098</div>
<div class="t" style="left:409.50px;top:78.00px;font-size:10.2px;letter-spacing:0.300px;">+-</div>
<div class="t" style="left:424.40px;top:78.00px;font-size:10.2px;letter-spacing:0.120px;">1.151</div>
<div class="t" style="left:463.20px;top:78.00px;font-size:10.2px;letter-spacing:0.244px;">4869395.580</div>
<div class="t" style="left:529.10px;top:78.00px;font-size:10.2px;letter-spacing:0.300px;">+-</div>
<div class="t" style="left:544.00px;top:78.00px;font-size:10.2px;letter-spacing:0.120px;">1.863</div>
<div class="t" style="left:3.40px;top:92.00px;font-size:10.2px;letter-spacing:-0.025px;">11-03-07</div>
<div class="t" style="left:47.30px;top:92.00px;font-size:10.2px;letter-spacing:0.213px;">14:52:00</div>
<div class="t" style="left:93.50px;top:92.00px;font-size:10.2px;letter-spacing:0.000px;transform:scaleX(0.89);transform-origin:0 0">FFMJ1</div>
<div class="t" style="left:131.50px;top:92.00px;font-size:10.2px;letter-spacing:0.300px;">PPP</div>
<div class="t" style="left:154.20px;top:92.00px;font-size:10.2px;letter-spacing:-0.057px;">14:52:15.0</div>
<div class="t" style="left:207.40px;top:92.00px;font-size:10.2px;letter-spacing:0.000px;">9</div>
<div class="t" style="left:226.20px;top:92.00px;font-size:10.2px;letter-spacing:0.264px;">4053455.089</div>
<div class="t" style="left:292.40px;top:92.00px;font-size:10.2px;letter-spacing:0.300px;">+-</div>
<div class="t" style="left:307.20px;top:92.00px;font-size:10.2px;letter-spacing:-0.005px;">1.304</div>
<div class="t" style="left:349.40px;top:92.00px;font-size:10.2px;letter-spacing:0.068px;">617729.113</div>
<div class="t" style="left:409.50px;top:92.00px;font-size:10.2px;letter-spacing:0.300px;">+-</div>
<div class="t" style="left:424.40px;top:92.00px;font-size:10.2px;letter-spacing:0.120px;">1.096</div>
<div class="t" style="left:463.20px;top:92.00px;font-size:10.2px;letter-spacing:0.244px;">4869395.567</div>
<div class="t" style="left:529.10px;top:92.00px;font-size:10.2px;letter-spacing:0.300px;">+-</div>
<div class="t" style="left:544.00px;top:92.00px;font-size:10.2px;letter-spacing:0.120px;">1.772</div>
<div class="t" style="left:3.40px;top:106.00px;font-size:10.2px;letter-spacing:-0.025px;">11-03-07</div>
<div class="t" style="left:47.30px;top:106.00px;font-size:10.2px;letter-spacing:0.213px;">14:52:01</div>
<div class="t" style="left:93.50px;top:106.00px;font-size:10.2px;letter-spacing:0.000px;transform:scaleX(0.89);transform-origin:0 0">FFMJ1</div>
<div class="t" style="left:131.50px;top:106.00px;font-size:10.2px;letter-spacing:0.300px;">PPP</div>
<div class="t" style="left:154.20px;top:106.00px;font-size:10.2px;letter-spacing:-0.057px;">14:52:16.0</div>
<div class="t" style="left:207.40px;top:106.00px;font-size:10.2px;letter-spacing:0.000px;">9</div>
<div class="t" style="left:226.20px;top:106.00px;font-size:10.2px;letter-spacing:0.264px;">4053455.212</div>
<div class="t" style="left:292.40px;top:106.00px;font-size:10.2px;letter-spacing:0.300px;">+-</div>
<div class="t" style="left:307.20px;top:106.00px;font-size:10.2px;letter-spacing:-0.005px;">1.251</div>
<div class="t" style="left:349.40px;top:106.00px;font-size:10.2px;letter-spacing:0.068px;">617729.154</div>
<div class="t" style="left:409.50px;top:106.00px;font-size:10.2px;letter-spacing:0.300px;">+-</div>
<div class="t" style="left:424.40px;top:106.00px;font-size:10.2px;letter-spacing:0.120px;">1.049</div>
<div class="t" style="left:463.20px;top:106.00px;font-size:10.2px;letter-spacing:0.244px;">4869395.617</div>
<div class="t" style="left:529.10px;top:106.00px;font-size:10.2px;letter-spacing:0.300px;">+-</div>
<div class="t" style="left:544.00px;top:106.00px;font-size:10.2px;letter-spacing:0.120px;">1.692</div>
<div class="t" style="left:3.40px;top:120.00px;font-size:10.2px;letter-spacing:-0.025px;">11-03-07</div>
<div class="t" style="left:47.30px;top:120.00px;font-size:10.2px;letter-spacing:0.213px;">14:52:02</div>
<div class="t" style="left:93.50px;top:120.00px;font-size:10.2px;letter-spacing:0.000px;transform:scaleX(0.89);transform-origin:0 0">FFMJ1</div>
<div class="t" style="left:131.50px;top:120.00px;font-size:10.2px;letter-spacing:0.300px;">PPP</div>
<div class="t" style="left:154.20px;top:120.00px;font-size:10.2px;letter-spacing:-0.057px;">14:52:17.0</div>
<div class="t" style="left:207.40px;top:120.00px;font-size:10.2px;letter-spacing:0.000px;">9</div>
<div class="t" style="left:226.20px;top:120.00px;font-size:10.2px;letter-spacing:0.264px;">4053455.223</div>
<div class="t" style="left:292.40px;top:120.00px;font-size:10.2px;letter-spacing:0.300px;">+-</div>
<div class="t" style="left:307.20px;top:120.00px;font-size:10.2px;letter-spacing:-0.005px;">1.204</div>
<div class="t" style="left:349.40px;top:120.00px;font-size:10.2px;letter-spacing:0.068px;">617729.127</div>
<div class="t" style="left:409.50px;top:120.00px;font-size:10.2px;letter-spacing:0.300px;">+-</div>
<div class="t" style="left:424.40px;top:120.00px;font-size:10.2px;letter-spacing:0.120px;">1.007</div>
<div class="t" style="left:463.20px;top:120.00px;font-size:10.2px;letter-spacing:0.244px;">4869395.570</div>
<div class="t" style="left:529.10px;top:120.00px;font-size:10.2px;letter-spacing:0.300px;">+-</div>
<div class="t" style="left:544.00px;top:120.00px;font-size:10.2px;letter-spacing:0.120px;">1.620</div>
<div class="t" style="left:3.40px;top:134.00px;font-size:10.2px;letter-spacing:-0.025px;">11-03-07</div>
<div class="t" style="left:47.30px;top:134.00px;font-size:10.2px;letter-spacing:0.213px;">14:52:03</div>
<div class="t" style="left:93.50px;top:134.00px;font-size:10.2px;letter-spacing:0.000px;transform:scaleX(0.89);transform-origin:0 0">FFMJ1</div>
<div class="t" style="left:131.50px;top:134.00px;font-size:10.2px;letter-spacing:0.300px;">PPP</div>
<div class="t" style="left:154.20px;top:134.00px;font-size:10.2px;letter-spacing:-0.057px;">14:52:18.0</div>
<div class="t" style="left:207.40px;top:134.00px;font-size:10.2px;letter-spacing:0.000px;">9</div>
<div class="t" style="left:226.20px;top:134.00px;font-size:10.2px;letter-spacing:0.264px;">4053455.220</div>
<div class="t" style="left:292.40px;top:134.00px;font-size:10.2px;letter-spacing:0.300px;">+-</div>
<div class="t" style="left:307.20px;top:134.00px;font-size:10.2px;letter-spacing:-0.005px;">1.163</div>
<div class="t" style="left:349.40px;top:134.00px;font-size:10.2px;letter-spacing:0.068px;">617729.078</div>
<div class="t" style="left:409.50px;top:134.00px;font-size:10.2px;letter-spacing:0.300px;">+-</div>
<div class="t" style="left:424.40px;top:134.00px;font-size:10.2px;letter-spacing:0.120px;">0.969</div>
<div class="t" style="left:463.20px;top:134.00px;font-size:10.2px;letter-spacing:0.244px;">4869395.511</div>
<div class="t" style="left:529.10px;top:134.00px;font-size:10.2px;letter-spacing:0.300px;">+-</div>
<div class="t" style="left:544.00px;top:134.00px;font-size:10.2px;letter-spacing:0.120px;">1.556</div>
<div class="t" style="left:3.40px;top:148.00px;font-size:10.2px;letter-spacing:-0.025px;">11-03-07</div>
<div class="t" style="left:47.30px;top:148.00px;font-size:10.2px;letter-spacing:0.213px;">14:52:04</div>
<div class="t" style="left:93.50px;top:148.00px;font-size:10.2px;letter-spacing:0.000px;transform:scaleX(0.89);transform-origin:0 0">FFMJ1</div>
<div class="t" style="left:131.50px;top:148.00px;font-size:10.2px;letter-spacing:0.300px;">PPP</div>
<div class="t" style="left:154.20px;top:148.00px;font-size:10.2px;letter-spacing:-0.057px;">14:52:19.0</div>
<div class="t" style="left:207.40px;top:148.00px;font-size:10.2px;letter-spacing:0.000px;">9</div>
<div class="t" style="left:226.20px;top:148.00px;font-size:10.2px;letter-spacing:0.264px;">4053455.229</div>
<div class="t" style="left:292.40px;top:148.00px;font-size:10.2px;letter-spacing:0.300px;">+-</div>
<div class="t" style="left:307.20px;top:148.00px;font-size:10.2px;letter-spacing:-0.005px;">1.125</div>
<div class="t" style="left:349.40px;top:148.00px;font-size:10.2px;letter-spacing:0.068px;">617729.084</div>
<div class="t" style="left:409.50px;top:148.00px;font-size:10.2px;letter-spacing:0.300px;">+-</div>
<div class="t" style="left:424.40px;top:148.00px;font-size:10.2px;letter-spacing:0.120px;">0.936</div>
<div class="t" style="left:463.20px;top:148.00px;font-size:10.2px;letter-spacing:0.244px;">4869395.526</div>
<div class="t" style="left:529.10px;top:148.00px;font-size:10.2px;letter-spacing:0.300px;">+-</div>
<div class="t" style="left:544.00px;top:148.00px;font-size:10.2px;letter-spacing:0.120px;">1.497</div>
<div class="t" style="left:3.40px;top:162.00px;font-size:10.2px;letter-spacing:-0.025px;">11-03-07</div>
<div class="t" style="left:47.30px;top:162.00px;font-size:10.2px;letter-spacing:0.213px;">14:52:05</div>
<div class="t" style="left:93.50px;top:162.00px;font-size:10.2px;letter-spacing:0.000px;transform:scaleX(0.89);transform-origin:0 0">FFMJ1</div>
<div class="t" style="left:131.50px;top:162.00px;font-size:10.2px;letter-spacing:0.300px;">PPP</div>
<div class="t" style="left:154.20px;top:162.00px;font-size:10.2px;letter-spacing:-0.057px;">14:52:20.0</div>
<div class="t" style="left:207.40px;top:162.00px;font-size:10.2px;letter-spacing:0.000px;">9</div>
<div class="t" style="left:226.20px;top:162.00px;font-size:10.2px;letter-spacing:0.264px;">4053455.149</div>
<div class="t" style="left:292.40px;top:162.00px;font-size:10.2px;letter-spacing:0.300px;">+-</div>
<div class="t" style="left:307.20px;top:162.00px;font-size:10.2px;letter-spacing:-0.005px;">1.091</div>
<div class="t" style="left:349.40px;top:162.00px;font-size:10.2px;letter-spacing:0.068px;">617729.054</div>
<div class="t" style="left:409.50px;top:162.00px;font-size:10.2px;letter-spacing:0.300px;">+-</div>
<div class="t" style="left:424.40px;top:162.00px;font-size:10.2px;letter-spacing:0.120px;">0.905</div>
<div class="t" style="left:463.20px;top:162.00px;font-size:10.2px;letter-spacing:0.244px;">4869395.599</div>
<div class="t" style="left:529.10px;top:162.00px;font-size:10.2px;letter-spacing:0.300px;">+-</div>
<div class="t" style="left:544.00px;top:162.00px;font-size:10.2px;letter-spacing:0.120px;">1.444</div>
<div class="t" style="left:3.40px;top:176.00px;font-size:10.2px;letter-spacing:-0.025px;">11-03-07</div>
<div class="t" style="left:47.30px;top:176.00px;font-size:10.2px;letter-spacing:0.213px;">14:52:06</div>
<div class="t" style="left:93.50px;top:176.00px;font-size:10.2px;letter-spacing:0.000px;transform:scaleX(0.89);transform-origin:0 0">FFMJ1</div>
<div class="t" style="left:131.50px;top:176.00px;font-size:10.2px;letter-spacing:0.300px;">PPP</div>
<div class="t" style="left:154.20px;top:176.00px;font-size:10.2px;letter-spacing:-0.057px;">14:52:21.0</div>
<div class="t" style="left:207.40px;top:176.00px;font-size:10.2px;letter-spacing:0.000px;">9</div>
<div class="t" style="left:226.20px;top:176.00px;font-size:10.2px;letter-spacing:0.264px;">4053455.147</div>
<div class="t" style="left:292.40px;top:176.00px;font-size:10.2px;letter-spacing:0.300px;">+-</div>
<div class="t" style="left:307.20px;top:176.00px;font-size:10.2px;letter-spacing:-0.005px;">1.060</div>
<div class="t" style="left:349.40px;top:176.00px;font-size:10.2px;letter-spacing:0.068px;">617728.993</div>
<div class="t" style="left:409.50px;top:176.00px;font-size:10.2px;letter-spacing:0.300px;">+-</div>
<div class="t" style="left:424.40px;top:176.00px;font-size:10.2px;letter-spacing:0.120px;">0.877</div>
<div class="t" style="left:463.20px;top:176.00px;font-size:10.2px;letter-spacing:0.244px;">4869395.730</div>
<div class="t" style="left:529.10px;top:176.00px;font-size:10.2px;letter-spacing:0.300px;">+-</div>
<div class="t" style="left:544.00px;top:176.00px;font-size:10.2px;letter-spacing:0.120px;">1.395</div>
<div class="t" style="left:3.40px;top:190.00px;font-size:10.2px;letter-spacing:-0.025px;">11-03-07</div>
<div class="t" style="left:47.30px;top:190.00px;font-size:10.2px;letter-spacing:0.213px;">14:52:07</div>
<div class="t" style="left:93.50px;top:190.00px;font-size:10.2px;letter-spacing:0.000px;transform:scaleX(0.89);transform-origin:0 0">FFMJ1</div>
<div class="t" style="left:131.50px;top:190.00px;font-size:10.2px;letter-spacing:0.300px;">PPP</div>
<div class="t" style="left:154.20px;top:190.00px;font-size:10.2px;letter-spacing:-0.057px;">14:52:22.0</div>
<div class="t" style="left:207.40px;top:190.00px;font-size:10.2px;letter-spacing:0.000px;">9</div>
<div class="t" style="left:226.20px;top:190.00px;font-size:10.2px;letter-spacing:0.264px;">4053455.152</div>
<div class="t" style="left:292.40px;top:190.00px;font-size:10.2px;letter-spacing:0.300px;">+-</div>
<div class="t" style="left:307.20px;top:190.00px;font-size:10.2px;letter-spacing:-0.005px;">1.031</div>
<div class="t" style="left:349.40px;top:190.00px;font-size:10.2px;letter-spacing:0.068px;">617728.952</div>
<div class="t" style="left:409.50px;top:190.00px;font-size:10.2px;letter-spacing:0.300px;">+-</div>
<div class="t" style="left:424.40px;top:190.00px;font-size:10.2px;letter-spacing:0.120px;">0.851</div>
<div class="t" style="left:463.20px;top:190.00px;font-size:10.2px;letter-spacing:0.244px;">4869395.847</div>
<div class="t" style="left:529.10px;top:190.00px;font-size:10.2px;letter-spacing:0.300px;">+-</div>
<div class="t" style="left:544.00px;top:190.00px;font-size:10.2px;letter-spacing:0.120px;">1.349</div>
</div>
<div class="abs" style="left:671px;top:579px;width:16px;height:207px;background:repeating-conic-gradient(#cfccc7 0 25%,#f4f2ee 0 50%) 0 0/2px 2px"></div>
<div class="btn" style="left:671px;top:579px;width:16px;height:16px"></div>
<svg class="abs" style="left:674px;top:583px" width="10" height="7"><polygon points="5,0.5 9,5 1,5" fill="#000"/></svg>
<div class="abs" style="left:671px;top:698px;width:16px;height:26px;background:linear-gradient(90deg,#ece6df,#d8d4ce 40%,#e0dbd4 70%,#d0ccc6);border:1px solid #7e7b76;border-radius:2px"></div>
<div class="btn" style="left:671px;top:754px;width:16px;height:16px"></div>
<svg class="abs" style="left:674px;top:758px" width="10" height="7"><polygon points="5,0.5 9,5 1,5" fill="#000"/></svg>
<div class="btn" style="left:671px;top:769px;width:16px;height:17px"></div>
<svg class="abs" style="left:674px;top:774px" width="10" height="7"><polygon points="1,0.5 9,0.5 5,5" fill="#000"/></svg>
<div class="abs" style="left:3px;top:799px;width:697px;height:1px;background:#e2ded7"></div>
<div class="t" style="left:14.10px;top:807.00px;font-size:10px;letter-spacing:0.256px;-webkit-text-stroke:0.15px #000;">Add Stream</div>
<div class="t" style="left:87.00px;top:807.00px;font-size:10px;letter-spacing:0.298px;-webkit-text-stroke:0.1px #a29f9a;color:#a29f9a;text-shadow:1px 1px 0 #f4f2ee">Delete Stream</div>
<div class="t" style="left:173.00px;top:807.00px;font-size:10px;letter-spacing:-0.055px;-webkit-text-stroke:0.15px #000;">Start</div>
<div class="t" style="left:211.60px;top:807.00px;font-size:10px;letter-spacing:0.143px;-webkit-text-stroke:0.1px #a29f9a;color:#a29f9a;text-shadow:1px 1px 0 #f4f2ee">Stop</div>
<div class="t" style="left:356.00px;top:807.00px;font-size:10px;letter-spacing:0.195px;-webkit-text-stroke:0.15px #000;">Help ?=Shift+F1</div>
<div class="abs" style="left:3px;top:826px;width:697px;height:1px;background:#a8a49c"></div>
<div class="abs" style="left:3px;top:827px;width:697px;height:1px;background:#ece6dc"></div>
</body></html>
